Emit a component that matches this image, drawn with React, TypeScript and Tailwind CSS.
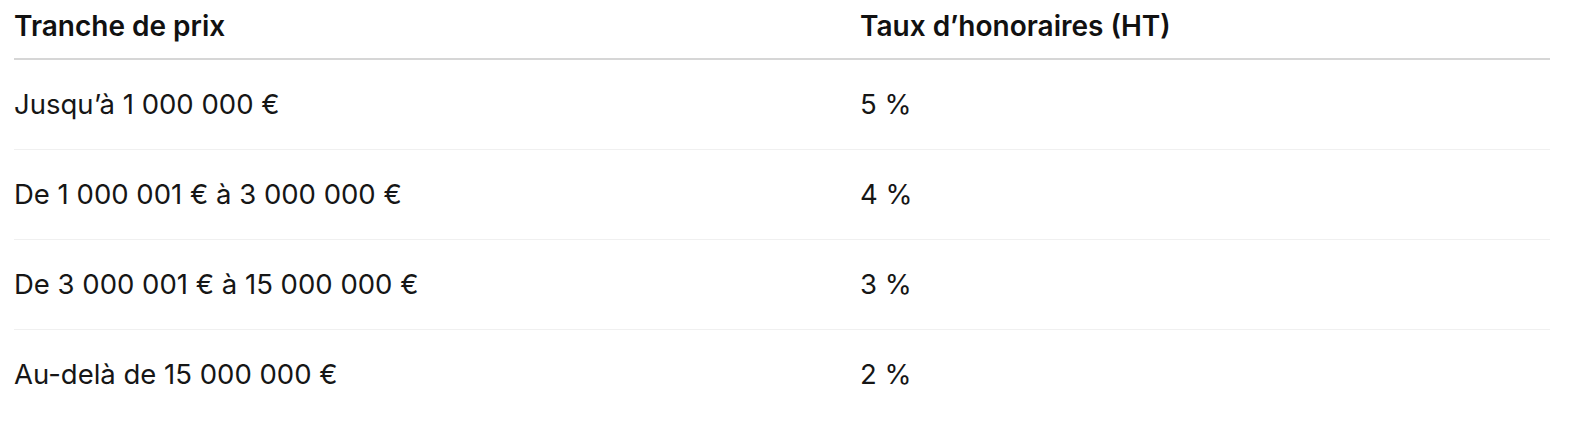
const rows = [
  { range: 'Jusqu’à 1 000 000 €', rate: '5 %' },
  { range: 'De 1 000 001 € à 3 000 000 €', rate: '4 %' },
  { range: 'De 3 000 001 € à 15 000 000 €', rate: '3 %' },
  { range: 'Au-delà de 15 000 000 €', rate: '2 %' },
];

export default function App() {
  return (
    <div className="w-[1572px] h-[424px] bg-white pl-[14px] pr-[22px] text-[#161616] font-['Inter','Liberation_Sans',sans-serif]">
      <div className="flex h-[60px] items-center pb-[6px] border-b-2 border-[#d6d6d6] text-[28px] font-semibold text-[#111]">
        <div className="w-[846px]">Tranche de prix</div>
        <div className="flex-1">Taux d’honoraires (HT)</div>
      </div>
      {rows.map((r, i) => (
        <div
          key={r.rate}
          className={`flex h-[90px] items-center text-[27.5px] ${i < rows.length - 1 ? 'border-b border-[#f0f0f0]' : ''}`}
        >
          <div className="w-[846px]">{r.range}</div>
          <div className="flex-1">{r.rate}</div>
        </div>
      ))}
    </div>
  );
}
